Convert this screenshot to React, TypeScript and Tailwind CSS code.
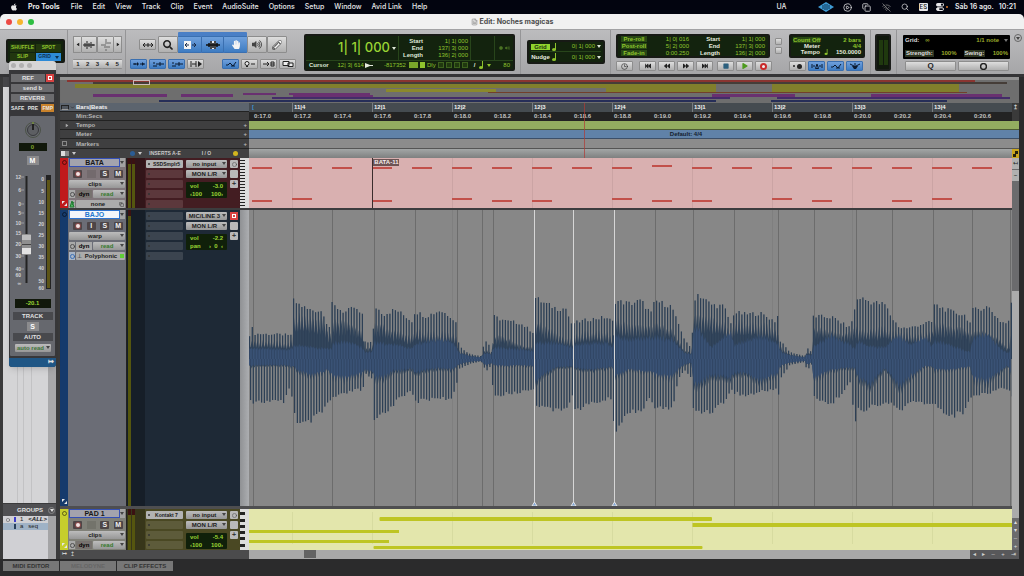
import * as React from "react";
import { clsx } from "clsx";
import { ChevronDown, Circle, CirclePlay, Clock3, Copy, FileText, Search, WifiOff } from "lucide-react";
import {
  FaApple,
  FaBackward,
  FaFastBackward,
  FaFastForward,
  FaForward,
  FaHandPaper,
  FaPencilAlt,
  FaPlay,
  FaSearch,
  FaStop,
  FaVolumeUp,
} from "react-icons/fa";

const menus = [
  "File",
  "Edit",
  "View",
  "Track",
  "Clip",
  "Event",
  "AudioSuite",
  "Options",
  "Setup",
  "Window",
  "Avid Link",
  "Help",
];

const beats = ["11|4", "12|1", "12|2", "12|3", "12|4", "13|1", "13|2", "13|3", "13|4"];

const seconds = Array.from({ length: 19 }, (_, i) => `0:${(17 + i * 0.2).toFixed(1)}`);

// x, peak, dense, core, core below, peak below
const envelope = [
  [249, 20, 15, 12, 6, 34],
  [251, 36, 20, 12, 8, 44],
  [254, 26, 19, 12, 7, 44],
  [285, 25, 18, 11, 7, 44],
  [288, 24, 18, 11, 7, 28],
  [293, 26, 19, 12, 9, 40],
  [293, 60, 48, 16, 5, 42],
  [296, 58, 45, 15, 12, 68],
  [308, 51, 44, 14, 18, 66],
  [323, 49, 42, 12, 16, 54],
  [327, 36, 30, 12, 12, 46],
  [332, 30, 26, 12, 18, 42],
  [332, 56, 40, 18, 20, 40],
  [345, 48, 40, 20, 22, 36],
  [354, 53, 36, 18, 20, 32],
  [363, 44, 26, 12, 15, 32],
  [365, 18, 12, 8, 12, 15],
  [373, 17, 12, 8, 14, 22],
  [374, 55, 36, 19, 22, 64],
  [384, 46, 34, 17, 20, 54],
  [393, 50, 30, 17, 14, 50],
  [397, 50, 30, 16, 13, 39],
  [412, 39, 24, 12, 11, 34],
  [415, 49, 30, 16, 16, 44],
  [426, 44, 29, 20, 12, 42],
  [440, 50, 28, 22, 10, 39],
  [451, 44, 28, 20, 12, 44],
  [457, 36, 22, 12, 8, 24],
  [459, 13, 9, 7, 6, 10],
  [470, 5, 4, 3, 3, 5],
  [481, 3, 2, 2, 2, 2],
  [483, 12, 8, 5, 5, 7],
  [487, 20, 10, 7, 7, 12],
  [492, 6, 5, 4, 4, 6],
  [493, 44, 24, 13, 7, 39],
  [506, 39, 22, 12, 8, 36],
  [520, 37, 14, 11, 7, 34],
  [534, 27, 12, 9, 8, 30],
  [534, 64, 40, 18, 28, 52],
  [543, 58, 34, 18, 18, 46],
  [557, 52, 26, 18, 9, 54],
  [566, 52, 22, 16, 9, 50],
  [573, 30, 20, 12, 8, 36],
  [573, 37, 26, 16, 10, 54],
  [590, 41, 30, 18, 12, 46],
  [606, 43, 28, 18, 10, 42],
  [613, 38, 24, 14, 9, 40],
  [614, 60, 42, 26, 20, 76],
  [630, 57, 36, 22, 12, 53],
  [641, 60, 36, 24, 14, 53],
  [651, 47, 34, 24, 14, 40],
  [655, 60, 36, 24, 18, 50],
  [672, 54, 30, 22, 20, 52],
  [678, 36, 20, 15, 12, 22],
  [684, 22, 9, 7, 6, 11],
  [692, 9, 7, 5, 4, 20],
  [693, 60, 42, 30, 26, 52],
  [698, 67, 44, 34, 28, 54],
  [711, 56, 42, 13, 18, 54],
  [724, 54, 38, 24, 20, 44],
  [731, 36, 30, 30, 22, 32],
  [734, 48, 40, 16, 16, 34],
  [745, 46, 40, 20, 16, 38],
  [760, 47, 38, 26, 24, 34],
  [777, 38, 30, 18, 18, 30],
  [779, 58, 20, 15, 12, 37],
  [780, 19, 13, 9, 8, 21],
  [790, 7, 5, 4, 4, 6],
  [805, 3, 2, 2, 2, 3],
  [807, 12, 8, 5, 6, 13],
  [812, 6, 5, 4, 4, 5],
  [813, 44, 33, 14, 22, 38],
  [832, 43, 28, 26, 12, 47],
  [850, 32, 26, 16, 10, 24],
  [855, 52, 36, 12, 10, 66],
  [858, 64, 30, 20, 20, 53],
  [870, 59, 30, 14, 29, 50],
  [885, 56, 34, 13, 10, 46],
  [892, 42, 30, 22, 20, 46],
  [900, 32, 30, 26, 30, 53],
  [910, 32, 26, 16, 20, 45],
  [925, 37, 27, 25, 8, 45],
  [932, 38, 28, 14, 8, 48],
  [934, 56, 36, 20, 12, 46],
  [950, 49, 34, 16, 12, 59],
  [965, 45, 30, 9, 10, 54],
  [971, 36, 24, 8, 8, 38],
  [972, 50, 30, 24, 22, 38],
  [988, 54, 28, 28, 25, 35],
  [1000, 39, 20, 12, 14, 30],
  [1008, 36, 12, 7, 7, 30],
  [1012, 60, 30, 14, 18, 40],
];

const CENTER = 359;

function sample(x: number, key: number) {
  let i = 1;
  while (i < envelope.length - 1 && envelope[i][0] < x) i++;
  const a = envelope[i - 1];
  const b = envelope[i];
  const t = b[0] === a[0] ? 1 : Math.min(1, Math.max(0, (x - a[0]) / (b[0] - a[0])));
  return a[key] + (b[key] - a[key]) * t;
}

const jitter = (n: number) => {
  const s = Math.sin(n * 12.9898) * 43758.5453;
  return s - Math.floor(s);
};

function band(topKey: number, bottomKey: number, scale: number, dip: number) {
  const up: string[] = [];
  const down: string[] = [];
  for (let i = 0; i < 545; i++) {
    const x = 249 + i * 1.4;
    const k = i % 2 ? dip : 1;
    up.push(`${x.toFixed(1)} ${(CENTER - sample(x, topKey) * k * (0.9 + jitter(i) * 0.14)).toFixed(1)}`);
    down.unshift(`${x.toFixed(1)} ${(CENTER + sample(x, bottomKey) * scale * k * (0.9 + jitter(i + 9) * 0.14)).toFixed(1)}`);
  }
  return `M${up.join("L")}L${down.join("L")}Z`;
}

const densePath = band(2, 4, 1.2, 0.62);
const corePath = band(3, 4, 1, 0.8);

const spikePath = Array.from({ length: 278 }, (_, i) => {
  const x = 249.6 + i * 2.75;
  const top = CENTER - sample(x, 1) * (0.92 + jitter(i) * 0.1);
  const bottom = CENTER + sample(x + 1, 5) * (0.92 + jitter(i + 40) * 0.1);
  return `M${x.toFixed(1)} ${top.toFixed(1)}V${CENTER}M${(x + 1).toFixed(1)} ${CENTER}V${bottom.toFixed(1)}`;
}).join("");

const transients = [253, 293, 332, 374, 415, 457, 482, 493, 655, 693, 734, 778, 814, 856, 892, 933, 972, 1010];
const warpMarkers = [534, 573, 614];

const highNotes = Array.from({ length: 19 }, (_, i) => ({ x: 252 + i * 40, y: i === 10 ? 165 : 167 }));
const lowNotes = [
  [252, 200],
  [292, 198],
  [372, 200],
  [452, 198],
  [492, 200],
  [532, 200],
  [612, 198],
  [652, 200],
  [692, 200],
  [772, 198],
  [812, 200],
  [892, 200],
  [932, 198],
];

const overview: [number, number, number, number, string][] = [
  [67, 975, 80, 2, "#8a3430"],
  [93, 1007, 82, 2, "#453d38"],
  [75, 716, 84, 4, "#817f2c"],
  [772, 959, 84, 4, "#817f2c"],
  [386, 496, 89, 3, "#8b892c"],
  [606, 716, 88, 4, "#817f2c"],
  [772, 959, 88, 4, "#817f2c"],
  [488, 967, 92, 1, "#72402b"],
  [93, 167, 94, 3, "#693070"],
  [181, 233, 94, 3, "#693070"],
  [243, 276, 93, 2, "#693070"],
  [289, 370, 93, 2, "#693070"],
  [293, 373, 95, 2, "#693070"],
  [712, 795, 94, 3, "#693070"],
  [871, 1002, 94, 3, "#693070"],
  [272, 730, 97, 2, "#432c68"],
  [777, 1010, 97, 2, "#432c68"],
  [159, 716, 100, 2, "#262e58"],
  [771, 947, 100, 2, "#262e58"],
];

type DropProps = { label: string; value: string; className?: string };

const Drop: React.FC<DropProps> = ({ label, value, className }) => (
  <span
    className={clsx(
      "relative flex h-2 min-w-0 items-center rounded-[1px] bg-linear-to-b from-[#bcbcbc] to-[#979797] text-[#1b1b1b]",
      className
    )}
  >
    <select
      aria-label={label}
      className="h-2 w-full appearance-none bg-transparent pr-[5px] pl-px text-center text-[6px] leading-2 font-bold outline-none"
    >
      <option>{value}</option>
    </select>
    <Caret className="pointer-events-none absolute top-[2px] right-px text-[#444]" />
  </span>
);

const Caret = ({ className }: { className?: string }) => (
  <svg viewBox="0 0 4 3" className={clsx("h-[3px] w-1 shrink-0", className)}>
    <path d="M0 0h4L2 3z" fill="currentColor" />
  </svg>
);

const Note = ({ className }: { className?: string }) => (
  <svg viewBox="0 0 4 8" className={clsx("h-2 w-1 shrink-0", className)}>
    <path d="M3 0h1v7H3z" fill="currentColor" />
    <ellipse cx="2" cy="6.500" rx="2" ry="1.500" fill="currentColor" />
  </svg>
);

type ToolProps = { label: string; className?: string; active?: boolean; children?: React.ReactNode };

const Tool: React.FC<ToolProps> = ({ label, className, active, children }) => (
  <button
    type="button"
    aria-label={label}
    className={clsx(
      "flex shrink-0 items-center justify-center rounded-[1px] border",
      active
        ? "border-[#3a6fb0] bg-linear-to-b from-[#6fa0dc] to-[#3d7cc2] text-[#0b1a30]"
        : "border-[#8d8d8d] bg-linear-to-b from-[#dedede] to-[#b0b0b0] text-[#222]",
      className
    )}
  >
    {children}
  </button>
);

const Lcd = ({ className, children }: { className?: string; children: React.ReactNode }) => (
  <div className={clsx("shrink-0 rounded-[2px] border-2 border-[#171a15] bg-[#13230e] text-[#8fc42d]", className)}>
    {children}
  </div>
);

const MenuBar = () => (
  <header className="flex h-[14px] shrink-0 items-center bg-[#02040f] pr-2 font-['Inter',sans-serif] text-[7px] font-medium text-[#e8e8ea]">
    <FaApple className="ml-[10px] h-2 w-2" />
    <nav className="ml-[10px] flex gap-[10px]">
      <button type="button" className="mr-px font-bold">
        Pro Tools
      </button>
      {menus.map(menu => (
        <button key={menu} type="button">
          {menu}
        </button>
      ))}
    </nav>
    <div className="ml-auto flex items-center">
      <span className="mr-[31px]">UA</span>
      <svg viewBox="0 0 16 10" className="mr-[9px] h-[10px] w-4">
        <path d="M0 5 8 0l8 5-8 5z" fill="#3f9bd4" />
        <path d="M5 3v4M7 2v6M9 2v6M11 3v4" stroke="#0d3556" strokeWidth="1" />
      </svg>
      <CirclePlay className="mr-[10px] h-[9px] w-[9px]" />
      <Copy className="mr-[11px] h-[9px] w-[9px]" />
      <WifiOff className="mr-[10px] h-[9px] w-[9px] text-[#888]" />
      <Search className="mr-[10px] h-2 w-2" />
      <span className="mr-2 rounded-[1px] bg-[#e8e8ea] px-px text-[6px] leading-2 text-[#111]">ES</span>
      <svg viewBox="0 0 9 8" className="mr-px h-2 w-[9px]">
        <rect y="0" width="8" height="3.500" rx="1.700" fill="#e8e8ea" />
        <circle cx="6" cy="1.700" r="1.100" fill="#02040f" />
        <rect x="0.500" y="4.800" width="7" height="2.700" rx="1.300" fill="none" stroke="#e8e8ea" />
        <circle cx="2" cy="6" r="1.500" fill="#e8e8ea" />
      </svg>
      <i className="mr-[7px] h-[2px] w-[2px] rounded-full bg-[#d8772b]" />
      <span className="mr-[5px] font-semibold">Sáb 16 ago.</span>
      <time className="font-semibold">10:21</time>
    </div>
  </header>
);

const TitleBar = () => (
  <div className="relative flex h-[15px] shrink-0 items-center justify-center rounded-t-[5px] bg-[#f1f1f1] pt-px font-['Inter',sans-serif] text-[7px] font-bold text-[#4d4d4d]">
    <div className="absolute left-[6px] flex gap-[5px]">
      <button type="button" aria-label="Close" className="h-[6px] w-[6px] rounded-full bg-[#ec4a44]" />
      <button type="button" aria-label="Minimize" className="h-[6px] w-[6px] rounded-full bg-[#f6b52e]" />
      <button type="button" aria-label="Zoom window" className="h-[6px] w-[6px] rounded-full bg-[#2fbf43]" />
    </div>
    <FileText className="mr-[2px] h-2 w-[7px] text-[#777]" />
    <h1>Edit: Noches magicas</h1>
  </div>
);

const Wave = ({ className }: { className?: string }) => (
  <svg viewBox="0 0 12 10" className={className} fill="none" stroke="currentColor">
    <path d="M0 5h12M2 3v4M4 1v8M6 3v4M8 2v6M10 4v2" />
  </svg>
);

const Arrows = () => (
  <svg viewBox="0 0 12 6" className="h-[6px] w-3" fill="none" stroke="currentColor">
    <path d="M1 3h10M3 1 1 3l2 2M9 1l2 2-2 2M6 1v4" />
  </svg>
);

const Nodes = () => (
  <svg viewBox="0 0 12 6" className="h-[6px] w-3" fill="none" stroke="currentColor">
    <path d="M0 3h4M2 2v2M7 3h5" />
    <path d="M4 1v4l2-2zM9 1v4l2-2z" fill="currentColor" stroke="none" />
  </svg>
);

const Steps = () => (
  <svg viewBox="0 0 12 6" className="h-[6px] w-3" fill="none" stroke="currentColor">
    <path d="M1 4h2l2-2 3 3 3-4M6 5h4" />
  </svg>
);

const MidiView = () => (
  <svg viewBox="0 0 12 6" className="h-[6px] w-3" fill="none" stroke="currentColor">
    <path d="M1 2h2M1 5h4M4 3h2M8 1v4M6 3h6" />
  </svg>
);

const TempoRow = ({ label, value, marked, note }: { label: string; value: string; marked?: boolean; note?: boolean }) => (
  <div className={clsx("flex h-[6px] items-center whitespace-nowrap leading-[6px]", marked && "mt-px")}>
    <span className={clsx("w-[27px] text-right", marked ? "bg-[#284814]" : "text-[#e6eadf]")}>{label}</span>
    {note && <Note className="ml-1 h-[6px]!" />}
    <span className={clsx("flex-1 text-right", note && "text-[#e6eadf]")}>{value}</span>
  </div>
);

const Toolbar = () => (
  <div className="flex h-[45px] shrink-0 overflow-hidden border-t border-[#a2a2a4] bg-linear-to-b from-[#bcbcbe] to-[#a6a6a8] text-[6px] font-bold">
    <div className="w-[68px] shrink-0 border-r border-[#959597] pt-[9px] pl-[6px]">
      <Lcd className="grid h-6 w-[59px] grid-cols-2 gap-px px-[2px] pt-[3px] text-[5px] text-[#5f8d24]">
        <button type="button" className="h-2 bg-[#22370f]">SHUFFLE</button>
        <button type="button" className="h-2 bg-[#22370f]">SPOT</button>
        <button type="button" className="h-2 bg-[#22370f]">SLIP</button>
        <button type="button" className="flex h-2 items-center justify-center gap-1 bg-[#2d8bd8] text-[#0d3050]">
          GRID <Caret />
        </button>
      </Lcd>
    </div>

    <div className="w-[58px] shrink-0 border-r border-[#959597] pt-[6px] pl-[5px]">
      <div className="flex">
        <Tool label="Zoom out horizontally" className="h-[17px] w-2 border-r-0">
          <Caret className="rotate-90" />
        </Tool>
        <Tool label="Audio zoom" className="h-[17px] w-4">
          <Wave className="h-[14px] w-3" />
        </Tool>
        <Tool label="MIDI zoom" className="h-[17px] w-[17px]">
          <svg viewBox="0 0 12 12" className="h-3 w-3" stroke="#666">
            <path d="M1 6h5M5 4h6M4 8h6M6 0v3M6 10v2" />
          </svg>
        </Tool>
        <Tool label="Zoom in horizontally" className="h-[17px] w-2 border-l-0">
          <Caret className="-rotate-90" />
        </Tool>
      </div>
      <div className="mt-[6px] flex w-[49px]">
        {[1, 2, 3, 4, 5].map(n => (
          <Tool key={n} label={`Zoom preset ${n}`} className="h-[10px] flex-1 border-x-0 text-[6px]">
            {n}
          </Tool>
        ))}
      </div>
    </div>

    <div className="w-[171px] shrink-0 pl-1">
      <div className="mt-[3px] flex h-5 items-end pl-[9px]">
        <Tool label="Zoom toggle" className="mr-[2px] mb-[3px] h-[11px] w-[17px]">
          <Arrows />
        </Tool>
        <Tool label="Zoomer tool" className="h-[17px] w-[20px]">
          <FaSearch className="h-[10px] w-[10px]" />
        </Tool>
        <div className="flex h-[21px] items-end rounded-[1px] bg-[#4a7fc6]">
          <Tool label="Trim tool" active className="h-[17px] w-[23px] gap-px border-x-0">
            <svg viewBox="0 0 14 10" className="h-[10px] w-[14px]">
              <path d="M1 1h7v8H1z" fill="#f4f4f4" />
              <path d="M6 5H3M9 5h4M11 3l2 2-2 2M4 3 2 5l2 2" fill="none" stroke="#1b2c4a" />
            </svg>
          </Tool>
          <Tool label="Selector tool" active className="h-[17px] w-[23px]">
            <svg viewBox="0 0 14 10" className="h-[10px] w-[14px]">
              <path d="M4 1h6v8H4z" fill="#e9eef5" />
              <path d="M0 5h14M3 3v4M5 1v8M7 3v5M9 1v8M11 3v4" stroke="#111" strokeWidth="1.500" />
            </svg>
          </Tool>
          <Tool label="Grabber tool" active className="h-[17px] w-[23px] border-x-0">
            <FaHandPaper className="h-[9px] w-2 text-[#f4f4f4]" />
          </Tool>
        </div>
        <Tool label="Scrubber tool" className="h-[17px] w-5">
          <FaVolumeUp className="h-[9px] w-[10px] text-[#444]" />
        </Tool>
        <Tool label="Pencil tool" className="h-[17px] w-5">
          <FaPencilAlt className="h-[10px] w-[10px] text-[#f4f4f4] [stroke:#444] [stroke-width:40px]" />
        </Tool>
      </div>
      <div className="mt-[6px] flex gap-[2px]">
        <Tool label="Tab to transients" active className="h-[10px] w-[17px]"><Nodes /></Tool>
        <Tool label="MIDI and automation view" active className="h-[10px] w-[17px]"><MidiView /></Tool>
        <Tool label="Link timeline and edit selection" active className="h-[10px] w-[17px]"><MidiView /></Tool>
        <Tool label="Insertion follows playback" className="h-[10px] w-[17px]">
          <svg viewBox="0 0 12 6" className="h-[6px] w-3" stroke="currentColor">
            <path d="M1 0v6M2 3h4M6 0v6" />
            <path d="M8 0v6l4-3z" fill="currentColor" stroke="none" />
          </svg>
        </Tool>
        <Tool label="Link track and edit selection" active className="ml-4 h-[10px] w-[17px]"><Steps /></Tool>
        <Tool label="Mirrored MIDI editing" className="h-[10px] w-[17px]">
          <svg viewBox="0 0 12 6" className="h-[6px] w-3" fill="none" stroke="currentColor">
            <circle cx="3" cy="2.500" r="2" fill="#eee" />
            <path d="M2 5.500h2M7 3h4" />
          </svg>
        </Tool>
        <Tool label="Automation follows edit" className="h-[10px] w-[17px]">
          <svg viewBox="0 0 12 6" className="h-[6px] w-3" fill="none" stroke="currentColor">
            <path d="M0 3h6M4 1l2 2-2 2M8 1h3v4H8zM8 3h3" />
          </svg>
        </Tool>
        <Tool label="Layered editing" className="h-[10px] w-[17px]">
          <svg viewBox="0 0 12 6" className="h-[6px] w-3" fill="#eee" stroke="currentColor">
            <path d="M1 0.500h6v4H1zM6 2h5v3.500H6z" />
          </svg>
        </Tool>
      </div>
    </div>

    <div className="shrink-0 pt-1 pl-[7px]">
      <Lcd className="flex h-[37px] w-[211px] flex-col">
        <div className="flex h-[25px]">
          <div className="flex w-[93px] items-center justify-end border-r border-[#28451b] font-['Inter',sans-serif] text-[13px] font-medium text-[#9bd534]">
            1| 1| 000 <Caret className="mx-[2px] text-[#dfe8d8]" />
          </div>
          <dl className="grid w-[72px] grid-cols-[24px_1fr] content-center border-r border-[#28451b] pr-[2px] text-right leading-[7px]">
            <dt className="text-[#dfe8d8]">Start</dt>
            <dd className="font-normal">1| 1| 000</dd>
            <dt className="text-[#dfe8d8]">End</dt>
            <dd className="font-normal">137| 3| 000</dd>
            <dt className="text-[#dfe8d8]">Length</dt>
            <dd className="font-normal">136| 2| 000</dd>
          </dl>
          <div className="w-6 border-r border-[#28451b]" />
          <div className="flex flex-1 items-center justify-center gap-[2px] text-[#4b7325]">
            <Circle className="h-1 w-1 fill-current" />
            <FaVolumeUp className="h-[6px] w-[5px]" />
          </div>
        </div>
        <div className="flex flex-1 items-center border-t border-[#28451b] px-[3px] leading-2">
          <span className="text-[#dfe8d8]">Cursor</span>
          <span className="ml-auto font-normal">12| 3| 614</span>
          <svg viewBox="0 0 8 5" className="mx-px h-[5px] w-2 text-[#e6eadf]">
            <path d="M0 0 5 2h3v1H5L0 5z" fill="currentColor" />
          </svg>
          <span className="w-[32px] text-right font-normal">-817352</span>
          <i className="ml-[3px] h-[6px] w-[9px] bg-[#79a72a]" />
          <i className="ml-[2px] h-[6px] w-[5px] bg-[#8fc42d]" />
          <span className="ml-[2px] font-normal">Dly</span>
          {[0, 1, 2, 3].map(i => (
            <i key={i} className="ml-[2px] h-[6px] w-[6px] border border-[#3d611e] bg-[#20380f]" />
          ))}
          <span className="ml-[6px] text-[#e6eadf]">/</span>
          <Note className="mx-1" />
          <Caret className="mr-3" />
          <span className="font-normal">80</span>
        </div>
      </Lcd>
    </div>

    <div className="ml-[5px] shrink-0 border-l border-[#959597] pt-[10px] pl-[6px]">
      <Lcd className="h-6 w-[78px] px-[2px]">
        <div className="flex h-[10px] items-center gap-[2px] border-b border-[#28451b]">
          <span className="w-[19px] bg-[#8fd32d] text-center leading-[6px] text-[#1c3010]">Grid</span>
          <Note />
          <span className="ml-auto font-normal">0| 1| 000</span>
          <Caret className="text-[#dfe8d8]" />
        </div>
        <div className="flex h-[10px] items-center gap-[2px]">
          <span className="w-[19px] text-center leading-[6px] text-[#e6eadf]">Nudge</span>
          <Note />
          <span className="ml-auto font-normal">0| 1| 000</span>
          <Caret className="text-[#dfe8d8]" />
        </div>
      </Lcd>
    </div>

    <div className="ml-[5px] shrink-0 border-l border-[#959597] pt-1 pl-[5px]">
      <Lcd className="grid h-6 w-[154px] grid-cols-[26px_1fr_26px_1fr] items-center gap-x-[2px] px-[3px] text-right leading-[6px]">
        <span className="bg-[#284814] text-center">Pre-roll</span>
        <span className="pr-[3px] font-normal">1| 0| 016</span>
        <span className="text-[#e6eadf]">Start</span>
        <span className="font-normal">1| 1| 000</span>
        <span className="bg-[#284814] text-center">Post-roll</span>
        <span className="pr-[3px] font-normal">5| 2| 000</span>
        <span className="text-[#e6eadf]">End</span>
        <span className="font-normal">137| 3| 000</span>
        <span className="bg-[#284814] text-center">Fade-in</span>
        <span className="pr-[3px] font-normal">0:00.250</span>
        <span className="text-[#e6eadf]">Length</span>
        <span className="font-normal">136| 2| 000</span>
      </Lcd>
      <div className="mt-[3px] flex gap-[2px]">
        <Tool label="Online" className="mr-1 h-[10px] w-[17px]"><Clock3 className="h-[7px] w-[7px]" /></Tool>
        <Tool label="Return to zero" className="h-[10px] w-[17px]"><FaFastBackward className="h-[6px] w-[6px]" /></Tool>
        <Tool label="Rewind" className="h-[10px] w-[17px]"><FaBackward className="h-[6px] w-[6px]" /></Tool>
        <Tool label="Fast forward" className="h-[10px] w-[17px]"><FaForward className="h-[6px] w-[6px]" /></Tool>
        <Tool label="Go to end" className="h-[10px] w-[17px]"><FaFastForward className="h-[6px] w-[6px]" /></Tool>
        <Tool label="Stop" className="ml-[2px] h-[10px] w-[17px]"><FaStop className="h-[6px] w-[6px] text-[#2c5f7d]" /></Tool>
        <Tool label="Play" className="h-[10px] w-[17px]"><FaPlay className="h-[6px] w-[6px] text-[#4d9a1e]" /></Tool>
        <Tool label="Record" className="h-[10px] w-[17px]">
          <i className="h-[7px] w-[7px] rounded-full border-2 border-[#c92a2a] bg-[#eee]" />
        </Tool>
      </div>
    </div>

    <div className="shrink-0 pt-2 pl-[3px]">
      <Tool label="Expand counters" className="h-[7px] w-[7px]" />
      <Tool label="Expand transport" className="mt-[2px] h-[7px] w-[7px]" />
    </div>

    <div className="shrink-0 pt-1 pl-[7px]">
      <Lcd className="h-6 w-[76px] px-[2px]">
        <TempoRow label="Count Off" value="2 bars" marked />
        <TempoRow label="Meter" value="4/4" />
        <TempoRow label="Tempo" value="150.0000" note />
      </Lcd>
      <div className="mt-[3px] flex gap-[2px]">
        <Tool label="Wait for note" className="h-[10px] w-[17px] gap-[2px]">
          <i className="h-[2px] w-[2px] rounded-full bg-[#222]" />
          <i className="h-[5px] w-[5px] rounded-full bg-[#222]" />
        </Tool>
        <Tool label="Metronome" active className="h-[10px] w-[17px]">
          <svg viewBox="0 0 12 6" className="h-[6px] w-3" fill="none" stroke="currentColor">
            <path d="M6 1 4.500 5.500h3zM1 1v4M3 2v2M9 2v2M11 1v4" />
          </svg>
        </Tool>
        <Tool label="MIDI merge" active className="h-[10px] w-[17px]"><Steps /></Tool>
        <Tool label="Conductor" active className="h-[10px] w-[17px]">
          <svg viewBox="0 0 12 6" className="h-[6px] w-3" fill="none" stroke="currentColor">
            <path d="M1 1l4 2M11 1 7 3M6 0v3" />
            <path d="M3 3h6L7 6H5z" fill="currentColor" stroke="none" />
          </svg>
        </Tool>
      </div>
    </div>

    <div className="ml-[5px] shrink-0 border-l border-[#959597] pt-1 pl-1">
      <div className="flex h-[37px] w-4 justify-center gap-px rounded-[2px] border-2 border-[#1b1d1a] bg-[#10180d] py-1">
        <i className="w-1 bg-[#20390f]" />
        <i className="w-1 bg-[#20390f]" />
      </div>
    </div>

    <div className="ml-[5px] shrink-0 border-l border-[#959597] pt-[5px] pl-[6px]">
      <div className="flex h-6 w-[107px] flex-col justify-between rounded-[1px] bg-black px-[2px] py-[2px] leading-[7px] text-[#9aa82b]">
        <div className="flex items-center">
          <span className="text-[#dcdcdc]">Grid:</span>
          <span className="ml-[6px]">∞</span>
          <span className="ml-auto">1/1 note</span>
          <Caret className="ml-[5px] text-[#777]" />
        </div>
        <div className="flex items-center">
          <span className="bg-[#2c3320] px-px text-[#dcdcdc]">Strength:</span>
          <span className="ml-auto">100%</span>
          <span className="ml-[7px] bg-[#2c3320] px-px text-[#dcdcdc]">Swing:</span>
          <span className="ml-auto">100%</span>
        </div>
      </div>
      <div className="mt-[2px] flex gap-[2px] pl-[2px]">
        <Tool label="Quantize" className="h-[10px] w-[51px] text-[8px]">Q</Tool>
        <Tool label="Quantize settings" className="h-[10px] w-[51px]">
          <Circle className="h-[7px] w-[7px] stroke-[5px]" />
        </Tool>
      </div>
    </div>

    <button
      type="button"
      aria-label="Toolbar menu"
      className="mt-1 ml-[4px] flex h-2 w-2 shrink-0 items-center justify-center rounded-full border border-[#666] text-[#444]"
    >
      <Caret />
    </button>
  </div>
);

const Small = ({ label, dark, children }: { label: string; dark?: boolean; children?: React.ReactNode }) => (
  <button
    type="button"
    aria-label={label}
    className={clsx(
      "flex h-2 items-center justify-center rounded-[1px] text-[7px] leading-2",
      dark ? "w-[9px] bg-[#4d4547] text-[#f0f0f0]" : "w-2 bg-[#b9b9b9] text-[#333]"
    )}
  >
    {children}
  </button>
);

type TrackProps = {
  name: string;
  view: string;
  elastic?: string;
  instrument?: string;
  input: string;
  midi?: boolean;
  armed?: boolean;
  selected?: boolean;
  volume: string;
  strip: string;
  control: string;
  panel: string;
  slot: string;
};

const TrackPanel: React.FC<TrackProps> = track => (
  <div className={clsx("flex w-[189px] shrink-0 overflow-hidden font-bold", track.panel)}>
    <div className={clsx("flex w-2 shrink-0 flex-col items-center justify-between py-[2px]", track.strip)}>
      <i className="h-[5px] w-[5px] rounded-full border border-black/50" />
      {/* resize handle */}
      <svg viewBox="0 0 5 5" className="h-[5px] w-[5px]">
        <path d="M0 0h3L0 3zM5 2v3H2z" fill="#e6e6e6" />
      </svg>
    </div>
    <div className={clsx("flex w-[58px] shrink-0 flex-col gap-[2px] px-[1px]", track.control)}>
      <div className="mb-px flex h-[9px] shrink-0 items-center">
        <span
          className={clsx(
            "h-[9px] flex-1 border text-center text-[7px] leading-[7px]",
            track.selected ? "border-[#2f74cf] bg-[#f4f6fa] text-[#2476cf]" : "border-[#3550b5] bg-[#a3a3ad] text-[#181818]"
          )}
        >
          {track.name}
        </span>
        <span className="flex h-[9px] w-[5px] items-center bg-[#a3a3a3] text-[#444]">
          <Caret />
        </span>
      </div>
      <div className="flex h-2 shrink-0 justify-around pl-[2px]">
        <Small label={`Record ${track.name}`} dark>
          <i className="h-[4px] w-[4px] rounded-full bg-[#f4e4e4] ring-1 ring-[#8a4a4a]" />
        </Small>
        {track.midi ? <span className="h-2 w-[9px] bg-black/10" /> : <Small label={`Input ${track.name}`} dark>I</Small>}
        <Small label={`Solo ${track.name}`} dark>S</Small>
        <Small label={`Mute ${track.name}`} dark>M</Small>
      </div>
      <Drop label={`${track.name} view`} value={track.view} className="shrink-0" />
      <div className="flex h-2 shrink-0 gap-px">
        <button type="button" aria-label="Freeze" className="flex w-[6px] items-center justify-center bg-[#a9a9a9]">
          <Circle className="h-[5px] w-[5px] stroke-[4px] text-[#444]" />
        </button>
        <button type="button" className={clsx("w-4 text-[6px] leading-2", track.midi ? "bg-[#77726f]" : "bg-[#a9a9a9]")}>
          dyn
        </button>
        <Drop label={`${track.name} automation`} value="read" className="flex-1 text-[#357a2c]!" />
      </div>
      {track.elastic && (
        <div className="flex h-2 shrink-0 gap-px text-[6px] leading-2">
          {track.midi ? (
            <svg viewBox="0 0 6 8" className="w-[6px] bg-[#a9a9a9]">
              <path d="M3 1 1 7h4zM3 5l2-3" fill="#4fb560" stroke="#1f7a31" />
            </svg>
          ) : (
            <i className="flex w-[6px] items-center justify-center bg-[#a9b6c8]">
              <Circle className="h-[5px] w-[5px] stroke-[4px] text-[#2a63b0]" />
            </i>
          )}
          <button
            type="button"
            className="flex flex-1 items-center rounded-[1px] bg-[#ababab] px-px text-[#1b1b1b]"
          >
            {track.selected && <span className="font-normal">⊥</span>}
            <span className="flex-1 text-center">{track.elastic}</span>
            {track.selected ? <i className="h-1 w-1 bg-[#5fce35]" /> : <Copy className="h-[5px] w-[5px]" />}
          </button>
        </div>
      )}
    </div>
    <div className="flex w-[19px] shrink-0 gap-px border-l border-[#222] bg-black/25 pl-[1px]">
      <i className="w-[3px] border-t-[6px] border-[#3b1212] bg-[#55560f]" />
      {track.midi && <i className="w-[3px] border-t-[6px] border-[#3b1212] bg-[#55560f]" />}
    </div>
    <div className="flex w-[38px] shrink-0 flex-col gap-[2px] py-[2px] pl-[1px]">
      {[0, 1, 2, 3, 4].map(slot => (
        <button
          key={slot}
          type="button"
          aria-label={`Insert ${slot + 1}`}
          className={clsx(
            "flex h-2 shrink-0 items-center rounded-[1px] pl-[2px] text-[5px] leading-2",
            slot === 0 && track.instrument ? "bg-[#b3b3b3] text-[#1b1b1b]" : track.slot
          )}
        >
          <i className="h-[2px] w-[2px] rounded-full bg-[#333]" />
          {slot === 0 && track.instrument && <span className="flex-1 text-center">{track.instrument}</span>}
        </button>
      ))}
    </div>
    <div className="flex w-[45px] shrink-0 flex-col gap-[2px] py-[2px] pr-[1px] pl-[3px]">
      <Drop label={`${track.name} input`} value={track.input} className="shrink-0" />
      <Drop label={`${track.name} output`} value="MON L/R" className="shrink-0" />
      <div className="mt-[2px] h-4 rounded-[1px] bg-[#10200a] px-1 text-[6px] leading-2 text-[#9bd534]">
        <div className="flex justify-between">
          <span>vol</span>
          <span>{track.volume}</span>
        </div>
        {track.midi ? (
          <div className="flex justify-between">
            <span>‹100</span>
            <span>100›</span>
          </div>
        ) : (
          <div className="flex justify-between">
            <span>pan</span>
            <span>›&nbsp; 0 &nbsp;‹</span>
          </div>
        )}
      </div>
    </div>
    <div className="flex w-3 shrink-0 flex-col gap-[2px] py-[2px] pl-[2px]">
      {track.armed ? (
        <button type="button" aria-label="Plugin window" className="flex h-2 w-2 items-center justify-center bg-[#d94242]">
          <i className="h-1 w-1 border border-white" />
        </button>
      ) : (
        <Small label="Plugin window">
          <Circle className="h-[5px] w-[5px]" />
        </Small>
      )}
      <Small label="Output window" />
      <Small label="Add send">+</Small>
    </div>
    <div
      className={clsx(
        "flex flex-1 flex-col justify-evenly overflow-hidden",
        track.midi ? "bg-[#dcdcdc]" : "bg-linear-to-r from-[#8f9194] to-[#acaeb1]"
      )}
    >
      {track.midi &&
        Array.from({ length: track.name === "BATA" ? 16 : 6 }, (_, i) => (
          <i key={i} className={clsx("block w-[5px] bg-[#222]", track.name === "BATA" ? "h-px" : "h-[3px]")} />
        ))}
    </div>
  </div>
);

const Universe = () => (
  <svg viewBox="60 77 959 26" preserveAspectRatio="none" className="h-[26px] w-full shrink-0 bg-[#6e6e6e]">
    <path d="M60 77h959v3H60z" fill="#929292" />
    {overview.map(([from, to, y, height, color]) => (
      <rect key={`${from}-${y}`} x={from} y={y} width={to - from} height={height} fill={color} />
    ))}
    <rect x="133.500" y="80.500" width="16" height="4" fill="none" stroke="#c9b9b9" />
  </svg>
);

const RulerName = ({ name, first }: { name: string; first?: boolean }) => (
  <div
    className={clsx(
      "flex w-[189px] shrink-0 items-center border-b border-[#222] pl-[5px] text-[6px] leading-2 font-bold",
      first ? "bg-[#5c646e] text-[#f2f2f2]" : "bg-[#3f3f40] text-[#b5b5b5]"
    )}
  >
    <span className="flex w-[11px] items-center text-[#aaa]">
      {first && <i className="-ml-1 h-[5px] w-2 shrink-0 border border-[#222] border-b-[#999] bg-[#50565e]" />}
      {first && <ChevronDown className="ml-px h-[5px] w-[5px] shrink-0 text-[#111]" />}
      {name === "Tempo" && <Caret className="-rotate-90" />}
      {name === "Markers" && <i className="-ml-[3px] h-[5px] w-[5px] border border-[#888]" />}
    </span>
    {name}
    {!first && name !== "Min:Secs" && <span className="mr-[2px] ml-auto">+</span>}
  </div>
);

const Rulers = () => (
  <div className="relative shrink-0 text-[6px] font-bold">
    <div className="flex h-[9px]">
      <RulerName name="Bars|Beats" first />
      <div className="flex flex-1 overflow-hidden bg-[#454b50] leading-[9px] text-[#f2f2f2]">
        <span className="w-[43px] shrink-0 pl-[3px] text-[#3d93d8]">[</span>
        {beats.map(beat => (
          <span key={beat} className="w-20 shrink-0 border-l border-[#777c80] pl-px">
            {beat}
          </span>
        ))}
      </div>
      <span className="w-[7px] shrink-0 bg-[#3a3a3a] text-center leading-[9px] text-[#ccc]">↥</span>
    </div>
    <div className="flex h-[9px]">
      <RulerName name="Min:Secs" />
      <div className="flex flex-1 overflow-hidden bg-[#232323] pl-[5px] leading-[9px] text-[#c4c4c4]">
        {seconds.map(time => (
          <span key={time} className="w-10 shrink-0">
            {time}
          </span>
        ))}
      </div>
      <span className="w-[7px] shrink-0 bg-[#3a3a3a]" />
    </div>
    <div className="flex h-[9px]">
      <RulerName name="Tempo" />
      <div className="flex-1 border-b border-[#4d5c33] bg-[#93ad60]" />
    </div>
    <div className="flex h-[9px]">
      <RulerName name="Meter" />
      <div className="flex-1 border-b border-[#3c4f68] bg-[#6082a8] pl-[104px] text-center leading-2 text-[#14202e]">Default: 4/4</div>
    </div>
    <div className="flex h-[10px]">
      <RulerName name="Markers" />
      <div className="flex-1 border-b border-[#555] bg-[#8c8c8c]" />
    </div>
    <div className="flex h-[9px]">
      <div className="flex w-[189px] shrink-0 items-center bg-[#414142] pl-px text-[5px] text-[#c9c9c9]">
        <i className="mr-[3px] h-[5px] w-2 border-r-4 border-[#888] bg-[#ddd]" />
        <Caret />
        <i className="ml-auto h-[5px] w-[5px] rounded-full bg-[#2b5c94]" />
        <Caret className="mr-[4px] ml-[3px]" />
        <span className="w-[38px] text-center">INSERTS A-E</span>
        <span className="w-[45px] text-center">I / O</span>
        <span className="w-[20px] pl-[4px]">
          <i className="block h-[5px] w-[5px] rounded-full bg-[#d3b51f]" />
        </span>
      </div>
      <div className="flex-1 bg-linear-to-b from-[#a3a6a6] to-[#7e8080]" />
      <svg viewBox="0 0 7 9" className="w-[7px] bg-[#c9a61c]">
        <path d="M1 5h2V2h3v3H4v3H1z" fill="#22200c" />
      </svg>
    </div>
    {/* playhead */}
    <i className="absolute top-0 left-[524px] h-full w-px bg-[#b03a35]/70" />
  </div>
);

const BataLane = () => (
  <div className="relative flex-1 bg-[#d9b0b0]">
    <svg viewBox="249 158 763 50" preserveAspectRatio="none" className="h-full w-full">
      {beats.map((beat, i) => (
        <path key={beat} d={`M${292.5 + i * 80} 158v50`} stroke="#cba4a4" />
      ))}
      {highNotes.map(note => (
        <rect key={note.x} x={note.x} y={note.y} width="20" height="2" fill="#c2504a" />
      ))}
      {lowNotes.map(([x, y]) => (
        <rect key={x} x={x} y={y} width="20" height="2" fill="#c2504a" />
      ))}
      <path d="M372.500 158v50" stroke="#3a2c2c" />
    </svg>
    <span className="absolute top-px left-[16.300%] bg-[#6d5454] px-px text-[6px] leading-[7px] font-bold text-[#f5eded]">
      BATA-11
    </span>
  </div>
);

const BajoLane = () => (
  <svg viewBox="249 210 763 296" preserveAspectRatio="none" className="h-full min-h-0 w-full flex-1 bg-[#878787]">
    {transients.map(x => (
      <path key={x} d={`M${x + 0.5} 210v296`} stroke="#6c6c6c" />
    ))}
    <path d="M452.500 210v296M772.500 210v296M852.500 210v296" stroke="#7f7f7f" />
    <path d={spikePath} stroke="#33465a" strokeWidth="1.200" fill="none" />
    <path d={densePath} fill="#33465c" />
    <path d={corePath} fill="#3a5275" />
    <path d={spikePath} stroke="#263850" strokeOpacity="0.450" fill="none" />
    {warpMarkers.map(x => (
      <g key={x}>
        <path d={`M${x + 0.5} 210v293`} stroke="#d6d6d6" />
        <path d={`M${x - 2} 506l2.500 -4l2.500 4z`} fill="#7fa5d6" stroke="#e6e6e6" />
      </g>
    ))}
  </svg>
);

const PadLane = () => (
  <svg viewBox="249 509 763 41" preserveAspectRatio="none" className="h-full w-full flex-1 bg-[#e3e6ac]">
    {beats.map((beat, i) => (
      <path key={beat} d={`M${292.5 + i * 80} 512v32`} stroke="#d7dba0" />
    ))}
    <g fill="#bec523">
      <rect x="379.500" y="517" width="332.500" height="4" rx="1" />
      <rect x="692.500" y="523" width="320" height="4" />
      <rect x="249" y="530" width="150" height="3" />
      <rect x="249" y="540" width="140" height="3" />
      <rect x="373.500" y="546" width="329" height="3" rx="1" />
    </g>
  </svg>
);

const FaderScale = () => (
  <div className="relative">
    <svg viewBox="10 174 44 118" className="h-[118px] w-[44px]">
      <g fill="#d3d4d7" fontSize="5" fontWeight="700" textAnchor="end">
        {[
          ["12", 180],
          ["6", 193],
          ["0", 207],
          ["5", 216],
          ["10", 226],
          ["15", 236],
          ["20", 247],
          ["30", 259],
          ["40", 272],
          ["60", 278],
          ["∞", 286],
        ].map(([text, y]) => (
          <text key={text} x="20" y={y}>
            {text}
          </text>
        ))}
        {[
          ["0", 182],
          ["5", 194],
          ["10", 205],
          ["15", 216],
          ["20", 227],
          ["25", 238],
          ["30", 249],
          ["35", 260],
          ["40", 271],
          ["50", 284],
          ["60", 291],
        ].map(([text, y]) => (
          <text key={text} x="43" y={y}>
            {text}
          </text>
        ))}
      </g>
      <path d="M25.500 177v107" stroke="#232323" strokeWidth="2" />
      <path d="M20 178h3M20 191h3M20 205h3M20 214h3M20 224h3M20 245h3M20 257h3M20 270h3" stroke="#9a9ba0" />
      <rect x="45" y="176" width="5" height="114" fill="#222" />
      <rect x="46" y="181" width="3" height="108" fill="#5c5416" />
      <rect x="21" y="235" width="9" height="21" rx="1" fill="#8f8f8f" />
      <rect x="21" y="236" width="9" height="5" fill="#bdbdbd" />
      <rect x="21" y="249" width="9" height="6" fill="#e2e2e2" />
      <path d="M21 245.500h9" stroke="#444" />
    </svg>
    <input
      type="range"
      aria-label="Send level"
      className="absolute top-0 left-[10px] h-full w-3 opacity-0 [writing-mode:vertical-lr]"
    />
  </div>
);

const SendWindow = () => (
  <aside className="absolute top-[61px] left-[9px] z-10 w-[47px] overflow-hidden rounded-[3px] bg-[#37373a] text-[6px] font-bold text-[#e2e2e2] shadow-md">
    <div className="flex h-[9px] items-center gap-[3px] bg-[#d6d6d6] pl-[2px]">
      <i className="h-[5px] w-[5px] rounded-full bg-[#b1b1b1]" />
      <i className="h-[5px] w-[5px] rounded-full bg-[#b1b1b1]" />
      <i className="h-[5px] w-[5px] rounded-full bg-[#b1b1b1]" />
    </div>
    <div className="mt-1 flex flex-col gap-[2px] px-[2px] text-center leading-2">
      <div className="flex gap-px">
        <button type="button" className="flex flex-1 items-center justify-center bg-[#6b6b6e]">REF</button>
        <button type="button" aria-label="Target" className="flex h-2 w-2 items-center justify-center bg-[#d94242]">
          <i className="h-1 w-1 border border-white" />
        </button>
      </div>
      <button type="button" className="bg-[#6b6b6e]">send b</button>
      <button type="button" className="bg-[#6b6b6e]">REVERB</button>
      <div className="flex justify-between text-[5px]">
        <button type="button">SAFE</button>
        <button type="button">PRE</button>
        <button type="button" className="bg-[#c9822b] px-px">FMP</button>
      </div>
    </div>
    <div className="mx-px mt-1 flex flex-col items-center rounded-[1px] bg-[#66686e] pt-[5px] pb-1">
      <svg viewBox="0 0 18 18" className="h-[18px] w-[18px]">
        <circle cx="9" cy="9" r="7.500" fill="none" stroke="#4b5247" />
        <circle cx="9" cy="9" r="5.500" fill="#5d5f63" stroke="#38393c" />
        <path d="M9 3v6" stroke="#222" strokeWidth="2" />
        <path d="M9 1v2" stroke="#86a832" />
      </svg>
      <span className="mt-1 w-7 bg-[#11180b] text-center leading-2 text-[#7fa52d]">0</span>
      <button type="button" className="mt-[5px] h-[9px] w-3 bg-[#8b8b8d] text-[7px] leading-[9px] text-white">M</button>
      <div className="mt-2">
        <FaderScale />
      </div>
      <span className="mt-2 w-9 bg-[#11180b] text-center leading-[9px] text-[#9bd534]">-20.1</span>
      <span className="mt-1 w-10 bg-[#48494d] text-center leading-2">TRACK</span>
      <button type="button" className="mt-[2px] h-[9px] w-3 bg-[#8b8b8d] text-[7px] leading-[9px] text-white">S</button>
      <span className="mt-[2px] w-10 bg-[#48494d] text-center leading-2">AUTO</span>
      <Drop label="Automation mode" value="auto read" className="mt-[3px] w-9 text-[#41753a]!" />
    </div>
    <div className="mt-[2px] flex h-[9px] items-center justify-end bg-[#1f5685] pr-[2px] text-[7px]">↦</div>
  </aside>
);

const Sidebar = () => (
  <div className="flex w-[60px] shrink-0 flex-col bg-[#3a3a3b] pr-1 pl-[3px]">
    <div className="h-[10px] shrink-0 bg-[#47474a]" />
    <div className="flex flex-1 bg-[#d4d4d6]">
      <i className="ml-[14px] w-[7px] border-x border-[#c2c2c4]" />
      <i className="w-2 border-r border-[#c2c2c4]" />
      <i className="ml-auto w-2 bg-[#a8a8aa]" />
    </div>
    <div className="mt-px flex h-3 shrink-0 items-center justify-between bg-[#505053] pr-px pl-[14px] text-[6px] font-bold text-[#e2e2e2]">
      GROUPS
      <button
        type="button"
        aria-label="Groups menu"
        className="flex h-[7px] w-[7px] items-center justify-center rounded-full border border-[#888]"
      >
        <Caret />
      </button>
    </div>
    <ul className="h-[43px] shrink-0 border-r-8 border-[#a4a4a6] bg-[#d0d0d4] text-[6px] leading-[7px] text-[#222]">
      <li className="flex items-center pl-[3px]">
        <Circle className="h-[4px] w-[4px]" />
        <i className="mx-1 h-[5px] w-[2px] bg-[#3d3dcc]" />
        <span>1</span>
        <span className="ml-[5px] font-bold italic">&lt;ALL&gt;</span>
      </li>
      <li className="flex items-center bg-[#9fb2c6] pl-[11px]">
        <i className="mr-1 h-[5px] w-[2px] bg-[#28405c]" />
        <span>a</span>
        <span className="ml-[5px]">seq</span>
      </li>
    </ul>
  </div>
);

const ScrollFooter = () => (
  <div className="flex h-[9px] shrink-0 text-[6px] leading-[9px] text-[#d2d2d2]">
    <div className="w-[189px] shrink-0 bg-[#4b4b4c] pl-[2px]">↦ &nbsp;↥</div>
    <div className="flex-1 bg-[#a8a8a8] pl-[55px]">
      <i className="block h-2 w-3 bg-[#636363]" />
    </div>
    <div className="flex w-[49px] shrink-0 justify-between bg-[#58585a] px-[3px]">
      {["◂", "▸", "–", "+", "⇥"].map(sign => (
        <button key={sign} type="button">
          {sign}
        </button>
      ))}
    </div>
  </div>
);

export default function App() {
  return (
    <div className="relative flex h-screen min-h-[520px] w-full flex-col overflow-hidden bg-[#02040f] font-['Liberation_Sans',Arial,sans-serif]">
      <MenuBar />
      <TitleBar />
      <Toolbar />
      <div className="h-[3px] shrink-0 bg-[#343436]" />

      <main className="flex min-h-0 flex-1 bg-[#2b2b2c] pr-[5px]">
        <Sidebar />
        <div className="flex min-w-0 flex-1 flex-col overflow-hidden">
          <Universe />
          <Rulers />
          <div className="flex min-h-0 flex-1">
            <div className="flex min-w-0 flex-1 flex-col">
              <section className="flex h-[52px] shrink-0 border-b-2 border-[#3c3c3e]">
                <TrackPanel
                  name="BATA"
                  view="clips"
                  elastic="none"
                  instrument="SSDSmplr5"
                  input="no input"
                  midi
                  volume="-3.0"
                  strip="bg-[#c01a1c]"
                  control="bg-[#80767a]"
                  panel="bg-[#431d22]"
                  slot="bg-[#5c383c]"
                />
                <BataLane />
              </section>
              <section className="flex min-h-0 flex-1 border-b-[3px] border-[#4e4e50]">
                <TrackPanel
                  name="BAJO"
                  view="warp"
                  elastic="Polyphonic"
                  input="MIC/LINE 3"
                  armed
                  selected
                  volume="-2.2"
                  strip="bg-[#153a6c]"
                  control="bg-[#6b6d76]"
                  panel="bg-[#1e2936]"
                  slot="bg-[#3b444f]"
                />
                <BajoLane />
              </section>
              <section className="flex h-[41px] shrink-0">
                <TrackPanel
                  name="PAD 1"
                  view="clips"
                  instrument="Kontakt 7"
                  input="no input"
                  midi
                  volume="-5.4"
                  strip="bg-[#c6ce2c]"
                  control="bg-[#808078]"
                  panel="bg-[#4a4823]"
                  slot="bg-[#5d5b3a]"
                />
                <PadLane />
              </section>
            </div>
            <div className="flex w-[7px] shrink-0 flex-col bg-[#6b6b6d] text-center text-[6px] leading-[11px] text-[#222]">
              <button type="button" aria-label="Nudge view" className="h-[11px] bg-[#b0b0b0]">↤</button>
              <button type="button" aria-label="Zoom view" className="mt-px h-[11px] bg-[#b0b0b0]">~</button>
              <i className="mt-[110px] flex-1 bg-[#ababab]" />
              {["▴", "▾", "–", "+"].map(sign => (
                <button key={sign} type="button" className="h-2 bg-[#6b6b6d] leading-2 text-[#ddd]">
                  {sign}
                </button>
              ))}
            </div>
          </div>
          <ScrollFooter />
        </div>
      </main>

      <footer className="h-[17px] shrink-0 bg-[#2b2b2c] pt-[2px] pl-[3px]">
        <div className="flex h-[10px] gap-px text-[6px] leading-[9px] font-bold text-[#333]">
          <button type="button" className="w-14 bg-[#777]">MIDI EDITOR</button>
          <button type="button" className="w-14 bg-[#777] text-[#666]">MELODYNE</button>
          <button type="button" className="w-14 bg-[#777]">CLIP EFFECTS</button>
        </div>
      </footer>

      <SendWindow />
    </div>
  );
}
